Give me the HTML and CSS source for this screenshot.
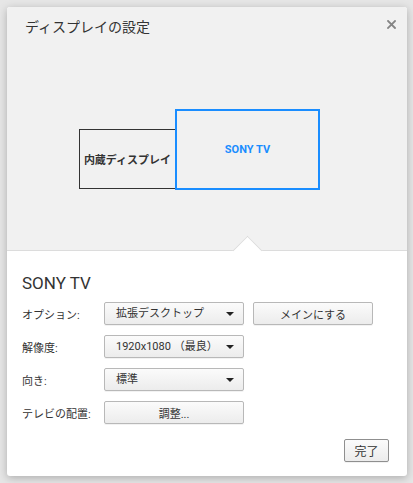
FILE: index.html
```html
<!DOCTYPE html>
<html>
<head>
    <title>ディスプレイの設定</title>
    <link rel="stylesheet" href="styles.css">
</head>
<body>
    <div class="dialog">
        <div class="top-pane">
            <h1 class="title">ディスプレイの設定</h1>
            <button class="close-button" aria-label="閉じる">
                <svg width="9" height="9" viewBox="0 0 9 9">
                    <path d="M1 1 L8 8 M8 1 L1 8" stroke="#858585" stroke-width="1.8" stroke-linecap="square"/>
                </svg>
            </button>

            <!-- display arrangement canvas -->
            <div class="arrangement">
                <div class="display internal">内蔵ディスプレイ</div>
                <div class="display external">SONY TV</div>
            </div>
            <div class="notch"></div>
        </div>

        <div class="bottom-pane">
            <h2 class="display-name">SONY TV</h2>

            <div class="settings">
                <div class="label">オプション:</div>
                <div class="controls">
                    <div class="select">拡張デスクトップ</div>
                    <button class="button wide">メインにする</button>
                </div>

                <div class="label">解像度:</div>
                <div class="controls">
                    <div class="select">1920x1080 （最良）</div>
                </div>

                <div class="label">向き:</div>
                <div class="controls">
                    <div class="select">標準</div>
                </div>

                <div class="label">テレビの配置:</div>
                <div class="controls">
                    <button class="button adjust">調整...</button>
                </div>
            </div>

            <div class="footer">
                <button class="button done">完了</button>
            </div>
        </div>
    </div>
</body>
</html>
```

FILE: styles.css
```css
body {
    margin: 0;
    padding: 7px 6px 7px 7px;
    background: #e6e6e6;
    font-family: Roboto, "Noto Sans CJK JP", sans-serif;
    color: #333;
}

.dialog {
    width: 400px;
    height: 469px;
    background: #fff;
    border-radius: 3px;
    box-shadow: 0 2px 8px rgba(0, 0, 0, 0.25);
    overflow: hidden;
    display: flex;
    flex-direction: column;
}

.top-pane {
    position: relative;
    height: 243px;
    background: #f1f1f1;
    border-bottom: 1px solid #dcdcdc;
}

.title {
    margin: 0;
    padding: 10px 0 0 18px;
    font-size: 14px;
    font-weight: normal;
    line-height: 20px;
    color: #333;
}

.close-button {
    position: absolute;
    top: 9px;
    right: 10px;
    width: 11px;
    height: 11px;
    padding: 1px;
    border: none;
    background: none;
    cursor: pointer;
}

.arrangement {
    position: relative;
    height: 200px;
}

.display {
    position: absolute;
    display: flex;
    align-items: center;
    justify-content: center;
    box-sizing: border-box;
    font-size: 11px;
    font-weight: bold;
}

.display.internal {
    left: 72px;
    top: 92px;
    width: 97px;
    height: 60px;
    border: 1px solid #333;
    color: #333;
}

.display.external {
    left: 168px;
    top: 72px;
    width: 145px;
    height: 81px;
    border: 2px solid #1a8dff;
    color: #1a8dff;
}

.notch {
    position: absolute;
    left: 230px;
    bottom: -11px;
    width: 20px;
    height: 20px;
    background: #fff;
    border-top: 1px solid #dcdcdc;
    border-left: 1px solid #dcdcdc;
    transform: rotate(45deg);
}

.bottom-pane {
    flex: 1;
    padding: 0 18px 0 15px;
    display: flex;
    flex-direction: column;
}

.display-name {
    margin: 0;
    padding: 21px 0 0 0;
    font-size: 17px;
    font-weight: normal;
    line-height: 22px;
}

.settings {
    display: grid;
    grid-template-columns: 82px 1fr;
    row-gap: 10px;
    margin-top: 8px;
    align-items: center;
    font-size: 11px;
}

.label {
    color: #333;
}

.controls {
    display: flex;
    gap: 9px;
}

.select,
.button {
    box-sizing: border-box;
    height: 23px;
    border: 1px solid #b8b8b8;
    border-radius: 2px;
    background: linear-gradient(#fbfbfb, #ececec);
    font-family: Roboto, "Noto Sans CJK JP", sans-serif;
    font-size: 11px;
    color: #333;
    box-shadow: 0 1px 0 rgba(0, 0, 0, 0.05);
}

.select {
    position: relative;
    width: 140px;
    padding-left: 11px;
    line-height: 21px;
}

    .select::after {
        content: "";
        position: absolute;
        right: 9px;
        top: 9px;
        border-left: 4px solid transparent;
        border-right: 4px solid transparent;
        border-top: 4px solid #222;
    }

.button {
    padding: 0;
    cursor: pointer;
}

.button.wide {
    width: 120px;
}

.button.adjust {
    width: 140px;
}

.footer {
    margin-top: auto;
    padding-bottom: 14px;
    display: flex;
    justify-content: flex-end;
}

.button.done {
    width: 45px;
    height: 23px;
    border-color: #8f8f8f;
    font-size: 12px;
}
```
